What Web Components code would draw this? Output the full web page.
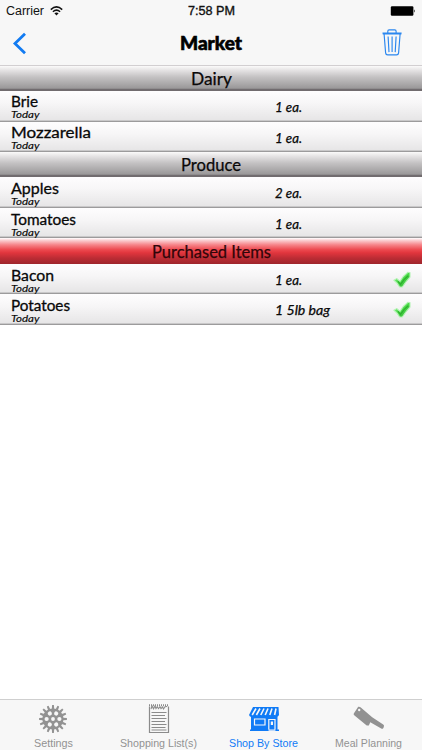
<!DOCTYPE html>
<html lang="en"><head><meta charset="utf-8"><title>Market</title>
<style>html,body{margin:0;height:750px;overflow:hidden;background:#fff}</style></head>
<body><market-app></market-app>
<script>
function define(name, html, setup){
  customElements.define(name, class extends HTMLElement{
    connectedCallback(){
      if(this.shadowRoot) return;
      const root=this.attachShadow({mode:'open'});
      const t=document.createElement('template');
      t.innerHTML=html(this);
      root.append(t.content.cloneNode(true));
      if(setup) setup(this,root);
    }
  });
}
const attr=(e,n)=>e.getAttribute(n)||'';

// Text stretched horizontally to the width given in its "w" attribute.
define('fit-label',()=>`<style>:host{display:block;white-space:nowrap;overflow:visible}span{display:inline-block;transform-origin:0 50%;white-space:nowrap}</style><span><slot></slot></span>`,(el,root)=>{
  const w=+attr(el,'w'), s=root.querySelector('span');
  el.style.width=w+'px';
  const natural=s.getBoundingClientRect().width;
  if(natural) s.style.transform=`scaleX(${w/natural})`;
});

define('status-bar',()=>`<style>
:host{display:grid;grid-template-columns:1fr auto 1fr;align-items:center;height:22px;padding:0 6px;font:12px/22px "Liberation Sans",Arial,sans-serif;color:#111}
.l{display:flex;align-items:center;gap:6px}.r{display:flex;justify-content:flex-end}.t{-webkit-text-stroke:.35px #111}svg{display:block}
</style><div class="l"><fit-label w="38">Carrier</fit-label>
<svg width="13" height="10" viewBox="0 0 13 10" fill="none" stroke="#111" stroke-width="1.5"><path d="M.8 3.6Q6.5-1.8 12.2 3.6M2.9 5.8Q6.5 2.4 10.1 5.8"/><path d="M4.4 7.3Q6.5 5.5 8.6 7.3L6.5 9.5Z" fill="#111" stroke="none"/></svg></div>
<fit-label class="t" w="47">7:58 PM</fit-label>
<div class="r"><svg width="26" height="10" viewBox="0 0 26 10"><rect x=".8" y=".2" width="22.6" height="9.6" rx="1.2"/><path d="M24 3.2q1.6 1.8 0 3.6z"/></svg></div>`);

define('nav-bar',()=>`<style>
:host{display:grid;grid-template-columns:1fr auto 1fr;align-items:center;height:43px;box-sizing:border-box;padding:0 19px 0 12px;font:900 18px/43px Lato,sans-serif;color:#000}
svg{display:block}.trash{justify-self:end;margin-top:-3px}.title{-webkit-text-stroke:.6px #000;margin-left:7px}
</style><svg width="16" height="23" viewBox="0 0 16 23" fill="none" stroke="#127bf2" stroke-width="2.8"><path d="M13 1.8 3 11.5 13 21.2"/></svg>
<fit-label class="title" w="62">Market</fit-label>
<svg class="trash" width="21" height="28" viewBox="0 0 21 28" fill="none" stroke="#2b87ef" stroke-width="1.15"><path d="M.5 5.1H19.6M.7 6H19.4M5.8 4.5V3.2Q5.8 1.9 7.1 1.9H12.8Q14.1 1.9 14.1 3.2V4.5M2.1 6 3.6 24.9Q3.8 26.9 5.6 26.9H14.6Q16.4 26.9 16.6 24.9L18.1 6M6.1 8.5 7 24.1M10.1 8.5V24.1M14.1 8.5 13.2 24.1"/></svg>`);

define('section-header',()=>`<style>
:host{display:flex;justify-content:center;box-sizing:border-box;height:25px;font:17px/26px Lato,sans-serif;color:#0a0808;-webkit-text-stroke:.25px;
background:linear-gradient(#fbfafa 0,#e6e4e5 16%,#c4c2c3 44%,#aaa8a9 72%,#9a9899 89%,#716c6f 93%,#716c6f 100%)}
:host([tone=red]){height:26px;line-height:27px;color:#300609;background:linear-gradient(#fff 0,#fbcfd2 9%,#f6858a 26%,#ed4b51 44%,#e1353d 57%,#bb2c34 78%,#9e252c 100%)}
</style><slot></slot>`);

define('item-row',el=>`<style>
:host{display:grid;grid-template-columns:264px 1fr 29px;box-sizing:border-box;height:var(--h,31px);padding-left:11px;background:linear-gradient(#fefdfe 0,#f7f6f7 40%,#e7e6e7 95%);border-bottom:1px solid #9c9b9c;box-shadow:inset 0 -1px #c9c8c9;color:#080808;font-family:Lato,sans-serif}
.name{font-size:15.5px;line-height:19px;height:19px;margin-top:1px;-webkit-text-stroke:.3px}
:host([low]) .name{margin-top:2px}
.day{font:italic 9.5px/10px Lato,sans-serif;height:10px;margin-top:-1px;-webkit-text-stroke:.15px}
.qty{font:italic 12.5px/18px Lato,sans-serif;margin-top:8px;-webkit-text-stroke:.25px}
svg{display:block;margin-top:7px}
</style><div><fit-label class="name" w="${attr(el,'w')}">${attr(el,'name')}</fit-label><fit-label class="day" w="28.5">Today</fit-label></div>
<fit-label class="qty" w="${attr(el,'qw')||27}">${attr(el,'qty')}</fit-label>
${el.hasAttribute('done')?`<svg width="19" height="18" viewBox="0 0 19 18"><defs><linearGradient id="g" x2="1" y2="1"><stop stop-color="#8df090"/><stop offset=".5" stop-color="#4bdc48"/><stop offset="1" stop-color="#2ba62c"/></linearGradient></defs><path d="M1 9.3 3.8 7.6 7 10.3Q10 4.8 15 1.3L17 1.8V6.2Q12.8 10.5 9.3 16L6.6 16Q4.5 12 1 9.3Z" fill="url(#g)" stroke="#b4f2b4" stroke-width="1.1"/><path d="M5 10.4 7.5 13.4Q10.5 8.4 15.2 4.8" fill="none" stroke="#2fae30" stroke-width="1.3"/></svg>`:''}`);

const teeth=Array.from({length:16},(_,i)=>`<path d="M12.8 4 13.1.1H14.9L15.2 4Z" transform="rotate(${i*22.5} 14 14)"/>`).join('');
const holes=Array.from({length:6},(_,i)=>`<circle cx="14" cy="7.6" r="2.1" fill="#f7f7f7" transform="rotate(${i*60+30} 14 14)"/>`).join('');
const icons={
settings:`<svg width="28" height="28" viewBox="0 0 28 28" fill="#929292">${teeth}<circle cx="14" cy="14" r="10.6"/>${holes}<circle cx="14" cy="14" r="1.9" fill="#f7f7f7"/></svg>`,
list:`<svg width="22" height="30" viewBox="0 0 22 30" fill="none" stroke="#8b8b8b"><path d="M1.5 2.5V28.5H20.5V2.5" stroke-width="1.2"/><path d="M1 1.2H21" stroke-width="2" stroke-dasharray="1 1"/><path d="M3 5 4 2 5.5 4.8 7 2 8 4.5 9.2 2.7 10.5 4.5 12 2.7 13 4.6 14.5 3 15.5 5 17 2.7 19 2.5" stroke-width="1.1"/><path d="M3.5 8.5H18.5M3.5 11.5H17M3.5 14.5H18.5M3.5 17.5H17M3.5 20.5H18.5M3.5 23.5H17.5M3.5 26H18.5" stroke-width="1.1"/></svg>`,
store:`<svg width="32" height="26" viewBox="0 0 32 26" fill="#107bf6"><path d="M5 1H30.5L31 9Q30 11.5 27.5 10.5 25.5 12 23.5 10.5 21 12 19 10.5 16.5 12 14.5 10.5 12 12 10 10.5 8 12 6 10.5 2 12 1 9Z"/><path d="M3 10H29.5V24.5H3Z"/><path d="M8 2.5 4.2 9M12 2.5 8.4 9M16 2.5 12.8 9M20 2.5 17.2 9M24 2.5 21.8 9M28 2.5 26.6 9" stroke="#f7f7f7" stroke-width="1.6"/><path d="M6.5 13H17V19H6.5ZM20.8 13.5H27V24H20.8Z" fill="none" stroke="#f7f7f7" stroke-width="1.2"/><path d="M22.8 15.5H25V19H22.8Z" fill="#f7f7f7"/><path d="M2 23.4H20.5V25H2ZM27.5 23.4H31V25H27.5Z"/></svg>`,
knife:`<svg width="32" height="26" viewBox="0 0 32 26"><path d="M5.2.8Q6.4.3 7.5 1.3L19.2 11.2 30.2 18.4Q31.5 19.3 30.8 21L30.2 22.3Q29.5 23.2 28.2 22.5L17.3 16.2 15.8 19.5 13.7 19.6 1.2 9.2Q.3 8.4.8 7.4Z" fill="#929292"/><circle cx="6.2" cy="4" r="1.2" fill="#f7f7f7"/></svg>`};
define('tab-item',el=>`<style>
:host{display:flex;flex-direction:column;align-items:center;color:#929292;font:10.5px/12px "Liberation Sans",Arial,sans-serif}
:host([active]){color:#107bf6}.i{height:32px;margin-top:3px;display:flex;align-items:center;justify-content:center}svg{display:block}fit-label{margin-top:2px}
</style><div class="i">${icons[attr(el,'icon')]}</div><fit-label w="${attr(el,'w')}">${attr(el,'label')}</fit-label>`);

define('tab-bar',()=>`<style>:host{display:grid;grid-template-columns:106px 105px 105px 105px;height:51px;box-sizing:border-box;border-top:1px solid #cfcfcf;background:#f7f7f7}</style><slot></slot>`);

define('market-app',()=>`<style>
:host{display:flex;flex-direction:column;width:422px;height:750px;background:#fff}
header{height:66px;box-sizing:border-box;background:#f7f7f7;border-bottom:1px solid #d2cfd1}main{flex:1}
</style><header><status-bar></status-bar><nav-bar></nav-bar></header>
<main>
<section-header><fit-label w="41">Dairy</fit-label></section-header>
<item-row name="Brie" w="27" qty="1 ea."></item-row>
<item-row name="Mozzarella" w="80" qty="1 ea." style="--h:30px"></item-row>
<section-header><fit-label w="60">Produce</fit-label></section-header>
<item-row low name="Apples" w="48" qty="2 ea."></item-row>
<item-row low name="Tomatoes" w="65" qty="1 ea." style="--h:30px"></item-row>
<section-header tone="red"><fit-label w="119">Purchased Items</fit-label></section-header>
<item-row low name="Bacon" w="43" qty="1 ea." done style="--h:30px"></item-row>
<item-row low name="Potatoes" w="59" qty="1 5lb bag" qw="55" done></item-row>
</main>
<tab-bar><tab-item icon="settings" label="Settings" w="39"></tab-item><tab-item icon="list" label="Shopping List(s)" w="77"></tab-item><tab-item icon="store" label="Shop By Store" w="69" active></tab-item><tab-item icon="knife" label="Meal Planning" w="67"></tab-item></tab-bar>`);
</script></body></html>
